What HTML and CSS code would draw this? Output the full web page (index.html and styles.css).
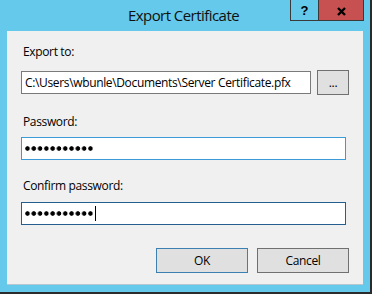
FILE: index.html
```html
<!DOCTYPE html>
<html lang="en">
<head>
  <meta charset="UTF-8">
  <title>Export Certificate</title>
  <link rel="stylesheet" href="styles.css">
</head>
<body>
  <div class="window">
    <div class="titlebar">
      <div></div>
      <div class="title">Export Certificate</div>
      <div class="caption-buttons">
        <div class="caption-btn help">?</div>
        <div class="caption-btn close">
          <svg width="9" height="9" viewBox="0 0 9 9">
            <path d="M1 1 L8 8 M8 1 L1 8" stroke="#000" stroke-width="2.4" fill="none"/>
          </svg>
        </div>
      </div>
    </div>

    <div class="client">
      <label class="label label-first">Export to:</label>
      <div class="row">
        <div class="textbox path">C:\Users\wbunle\Documents\Server Certificate.pfx</div>
        <button class="btn browse">...</button>
      </div>

      <label class="label label-password">Password:</label>
      <div class="textbox password hover">
        <span class="dots"></span>
      </div>

      <label class="label label-confirm">Confirm password:</label>
      <div class="textbox password focused">
        <span class="dots"></span><span class="caret"></span>
      </div>

      <div class="actions">
        <button class="btn btn-default">OK</button>
        <button class="btn">Cancel</button>
      </div>
    </div>
  </div>
</body>
</html>
```

FILE: styles.css
```css
body {
  margin: 0;
  font-family: "Open Sans", "Noto Sans", sans-serif;
  font-size: 12px;
  letter-spacing: -0.35px;
  color: #000000;
}

.window {
  width: 372px;
  height: 294px;
  box-sizing: border-box;
  background-color: #64c9ea;
  border-right: 2px solid #2b2b2b;
  border-bottom: 2px solid #2b2b2b;
}

/* Titelleiste */
.titlebar {
  height: 31px;
  display: grid;
  grid-template-columns: 1fr auto 1fr;
}
.title {
  font-size: 15px;
  letter-spacing: -0.55px;
  line-height: 20px;
  padding-top: 5px;
  padding-right: 3px;
  color: #111111;
}
.caption-buttons {
  justify-self: end;
  align-self: start;
  display: flex;
  margin-right: 6px;
  border: 1px solid #3a3a3a;
  border-top: none;
}
.caption-btn {
  height: 20px;
  display: flex;
  align-items: center;
  justify-content: center;
}
.help {
  width: 27px;
  font-family: "Liberation Sans", Arial, sans-serif;
  font-weight: bold;
  font-size: 13px;
  letter-spacing: 0;
}
.close {
  width: 45px;
  background-color: #c75050;
  border-left: 1px solid #3a3a3a;
  padding-top: 2px;
  box-sizing: border-box;
}

/* Inhalt */
.client {
  height: 254px;
  margin: 0 7px;
  box-sizing: border-box;
  padding: 13px 14px 0 14px;
  background-color: #f0f0f0;
  border-bottom: 1px solid #b4c6cf;
  display: flex;
  flex-direction: column;
}
.label {
  display: block;
  line-height: 16px;
  padding-left: 2px;
}
.label-first { margin-bottom: 10px; }
.label-password { margin-top: 19px; margin-bottom: 7px; }
.label-confirm { margin-top: 18px; margin-bottom: 8px; }

.row {
  display: flex;
  align-items: center;
  gap: 6px;
}

.textbox {
  height: 23px;
  box-sizing: border-box;
  background-color: #ffffff;
  border: 1px solid #7a7a7a;
  padding-left: 3px;
  line-height: 21px;
  white-space: nowrap;
  display: flex;
  align-items: center;
}
.path { width: 290px; }
.password { width: 325px; }
.hover { border-color: #3b9bd8; }
.focused { border-color: #245f90; }

.dots {
  width: 68px;
  height: 5px;
  background: radial-gradient(circle at 2.5px 2.5px, #000 1.9px, transparent 2.6px) 0 0 / 6.3px 5px repeat-x;
}
.caret {
  width: 1px;
  height: 15px;
  margin-left: 2px;
  background-color: #000000;
}

.btn {
  font-family: inherit;
  font-size: 12px;
  letter-spacing: inherit;
  color: #000000;
  background-color: #e0e0e0;
  border: 1px solid #707070;
  padding: 0;
  margin: 0;
}
.browse {
  width: 32px;
  height: 25px;
  line-height: 14px;
}

.actions {
  display: flex;
  justify-content: flex-end;
  gap: 9px;
  margin-top: 23px;
}
.actions .btn {
  width: 92px;
  height: 25px;
}
.btn-default {
  border-color: #3c7fb1;
}
```
